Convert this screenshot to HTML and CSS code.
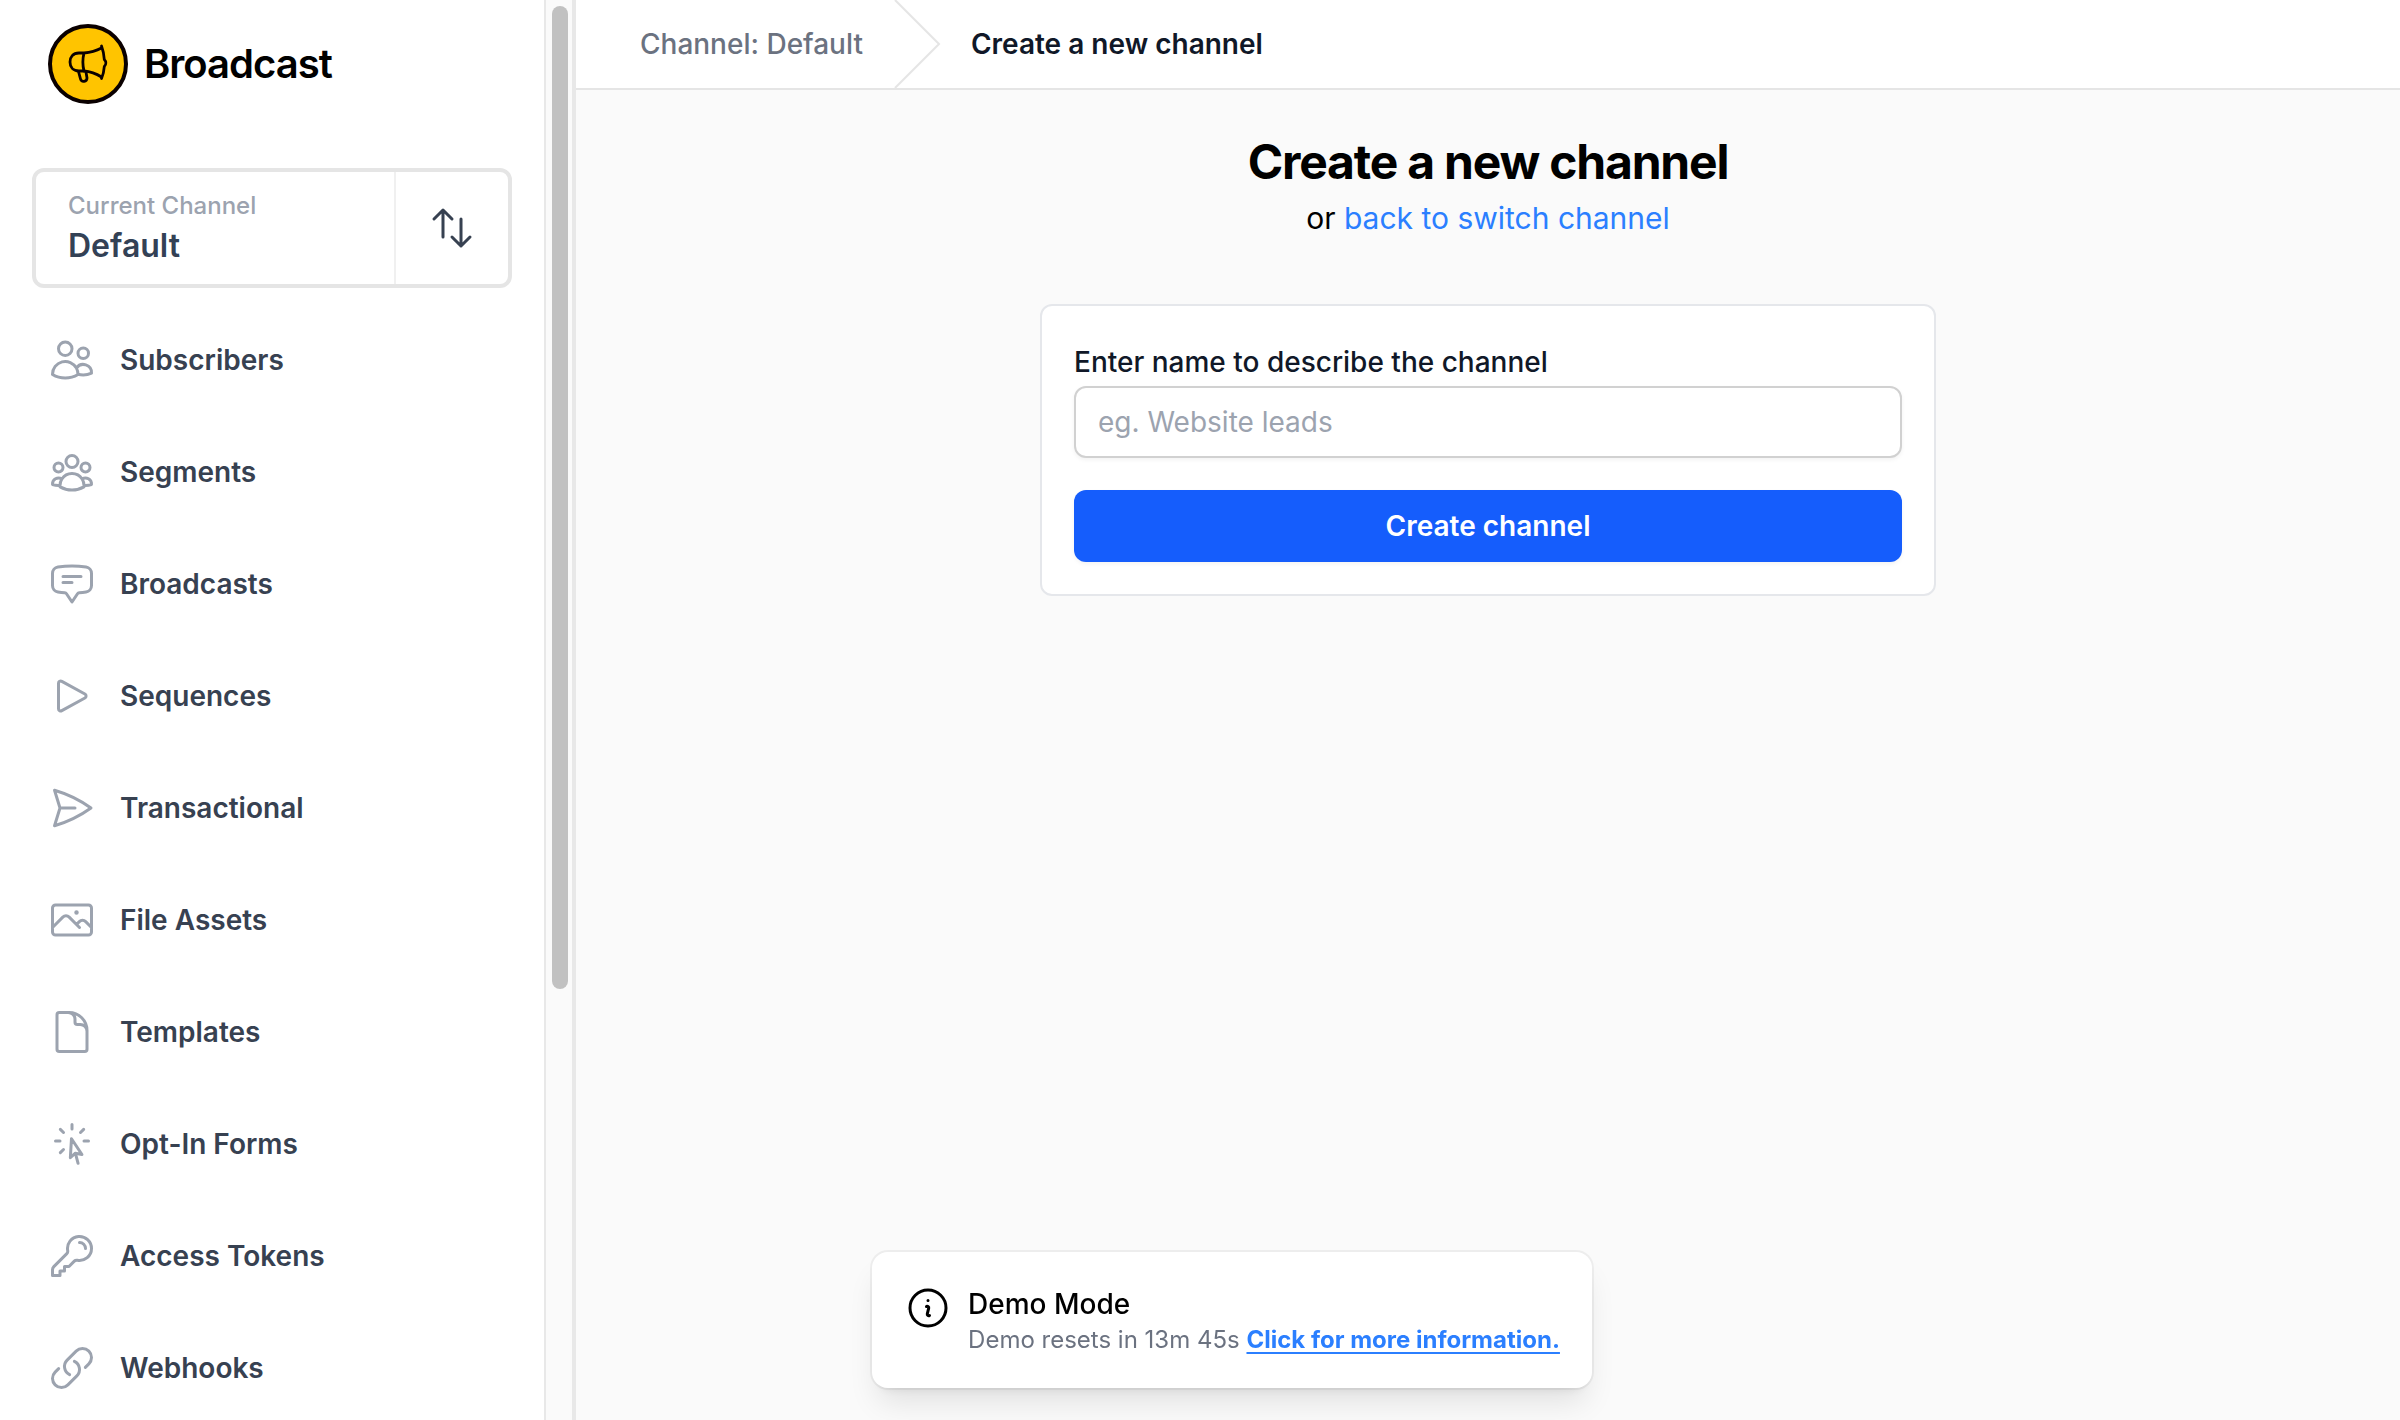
FILE: index.html
```html
<!DOCTYPE html>
<html lang="en">
<head>
    <meta charset="UTF-8" />
    <meta name="viewport" content="width=device-width, initial-scale=1" />
    <title>Create a new channel</title>
    <link rel="stylesheet" href="styles.css">
</head>
<body>

<aside class="sidebar">
    <div class="sidebar-content">
        <a class="brand" href="#">
            <svg class="brand-logo" viewBox="0 0 80 80" aria-hidden="true">
                <circle cx="40" cy="40" r="38" fill="#ffc400" stroke="#0a0000" stroke-width="4" />
                <g fill="none" stroke="#0a0000" stroke-width="2.8" stroke-linecap="round" stroke-linejoin="round">
                    <path d="M36 29h-5c-6 0-9 4-9 9s3 9 9 9h5c-1.500-6-1.500-12 0-18c7-.5 12-2 17.500-5" />
                    <path d="M36 47c7 .5 12 2.500 17.500 6" />
                    <path d="M53.500 22c1.500 4 2.500 9 2.800 13.500c2 2 2 5 0 7c-.3 4.500-1.300 8.500-2.800 12" />
                    <path d="M30.500 47.500l2 7.500c1 3.500 6.500 3 6.500-1l-1-6" />
                </g>
            </svg>
            <span>Broadcast</span>
        </a>

        <div class="channel">
            <div class="channel-current">
                <span class="channel-label">Current Channel</span>
                <span class="channel-name">Default</span>
            </div>
            <button class="channel-switch" type="button" aria-label="Switch channel">
                <svg class="icon" viewBox="0 0 24 24"><path d="M3 7.500 7.500 3m0 0L12 7.500M7.500 3v13.500m13.500 0L16.500 21m0 0L12 16.500m4.500 4.500V7.500" /></svg>
            </button>
        </div>

        <nav class="menu">
            <a class="menu-item" href="#">
                <svg class="icon" viewBox="0 0 24 24"><path d="M15 19.128a9.380 9.380 0 0 0 2.625.372 9.337 9.337 0 0 0 4.121-.952 4.125 4.125 0 0 0-7.533-2.493M15 19.128v-.003c0-1.113-.285-2.160-.786-3.070M15 19.128v.106A12.318 12.318 0 0 1 8.624 21c-2.331 0-4.512-.645-6.374-1.766l-.001-.109a6.375 6.375 0 0 1 11.964-3.070M12 6.375a3.375 3.375 0 1 1-6.750 0 3.375 3.375 0 0 1 6.750 0Zm8.250 2.250a2.625 2.625 0 1 1-5.250 0 2.625 2.625 0 0 1 5.250 0Z" /></svg>
                Subscribers
            </a>
            <a class="menu-item" href="#">
                <svg class="icon" viewBox="0 0 24 24"><path d="M18 18.720a9.094 9.094 0 0 0 3.741-.479 3 3 0 0 0-4.682-2.720m.940 3.198.001.031c0 .225-.012.447-.037.666A11.944 11.944 0 0 1 12 21c-2.170 0-4.207-.576-5.963-1.584A6.062 6.062 0 0 1 6 18.719m12 0a5.971 5.971 0 0 0-.941-3.197m0 0A5.995 5.995 0 0 0 12 12.750a5.995 5.995 0 0 0-5.058 2.772m0 0a3 3 0 0 0-4.681 2.720 8.986 8.986 0 0 0 3.740.477m.940-3.197a5.971 5.971 0 0 0-.940 3.197M15 6.750a3 3 0 1 1-6 0 3 3 0 0 1 6 0Zm6 3a2.250 2.250 0 1 1-4.500 0 2.250 2.250 0 0 1 4.500 0Zm-13.500 0a2.250 2.250 0 1 1-4.500 0 2.250 2.250 0 0 1 4.500 0Z" /></svg>
                Segments
            </a>
            <a class="menu-item" href="#">
                <svg class="icon" viewBox="0 0 24 24"><path d="M7.500 8.250h9m-9 3H12m-9.750 1.510c0 1.600 1.123 2.994 2.707 3.227 1.129.166 2.270.293 3.423.379.350.026.670.210.865.501L12 21l2.755-4.133a1.140 1.140 0 0 1 .865-.501 48.172 48.172 0 0 0 3.423-.379c1.584-.233 2.707-1.626 2.707-3.228V6.741c0-1.602-1.123-2.995-2.707-3.228A48.394 48.394 0 0 0 12 3c-2.392 0-4.744.175-7.043.513C3.373 3.746 2.250 5.140 2.250 6.741v6.018Z" /></svg>
                Broadcasts
            </a>
            <a class="menu-item" href="#">
                <svg class="icon" viewBox="0 0 24 24"><path d="M5.250 5.653c0-.856.917-1.398 1.667-.986l11.540 6.347a1.125 1.125 0 0 1 0 1.972l-11.540 6.347a1.125 1.125 0 0 1-1.667-.986V5.653Z" /></svg>
                Sequences
            </a>
            <a class="menu-item" href="#">
                <svg class="icon" viewBox="0 0 24 24"><path d="M6 12 3.269 3.125A59.769 59.769 0 0 1 21.485 12 59.768 59.768 0 0 1 3.270 20.875L5.999 12Zm0 0h7.500" /></svg>
                Transactional
            </a>
            <a class="menu-item" href="#">
                <svg class="icon" viewBox="0 0 24 24"><path d="m2.250 15.750 5.159-5.159a2.250 2.250 0 0 1 3.182 0l5.159 5.159m-1.500-1.500 1.409-1.409a2.250 2.250 0 0 1 3.182 0l2.909 2.909m-18 3.750h16.500a1.500 1.500 0 0 0 1.500-1.500V6a1.500 1.500 0 0 0-1.500-1.500H3.750A1.500 1.500 0 0 0 2.250 6v12a1.500 1.500 0 0 0 1.500 1.500Zm10.500-11.250h.008v.008h-.008V8.250Zm.375 0a.375.375 0 1 1-.750 0 .375.375 0 0 1 .750 0Z" /></svg>
                File Assets
            </a>
            <a class="menu-item" href="#">
                <svg class="icon" viewBox="0 0 24 24"><path d="M19.500 14.250v-2.625a3.375 3.375 0 0 0-3.375-3.375h-1.500A1.125 1.125 0 0 1 13.500 7.125v-1.500a3.375 3.375 0 0 0-3.375-3.375H8.250m2.250 0H5.625c-.621 0-1.125.504-1.125 1.125v17.250c0 .621.504 1.125 1.125 1.125h12.750c.621 0 1.125-.504 1.125-1.125V11.250a9 9 0 0 0-9-9Z" /></svg>
                Templates
            </a>
            <a class="menu-item" href="#">
                <svg class="icon" viewBox="0 0 24 24"><path d="M15.042 21.672 13.684 16.600m0 0-2.510 2.225.569-9.470 5.227 7.917-3.286-.672ZM12 2.250V4.500m5.834.166-1.591 1.591M20.250 10.500H18M7.757 14.743l-1.590 1.590M6 10.500H3.750m4.007-4.243-1.590-1.590" /></svg>
                Opt-In Forms
            </a>
            <a class="menu-item" href="#">
                <svg class="icon" viewBox="0 0 24 24"><path d="M15.750 5.250a3 3 0 0 1 3 3m3 0a6 6 0 0 1-7.029 5.912c-.563-.097-1.159.026-1.563.430L10.500 17.250H8.250v2.250H6v2.250H2.250v-2.818c0-.597.237-1.170.659-1.591l6.499-6.499c.404-.404.527-1 .430-1.563A6 6 0 1 1 21.750 8.250Z" /></svg>
                Access Tokens
            </a>
            <a class="menu-item" href="#">
                <svg class="icon" viewBox="0 0 24 24"><path d="M13.190 8.688a4.500 4.500 0 0 1 1.242 7.244l-4.500 4.500a4.500 4.500 0 0 1-6.364-6.364l1.757-1.757m13.350-.622 1.757-1.757a4.500 4.500 0 0 0-6.364-6.364l-4.500 4.500a4.500 4.500 0 0 0 1.242 7.244" /></svg>
                Webhooks
            </a>
        </nav>
    </div>
    <div class="scrollbar" aria-hidden="true">
        <div class="scrollbar-thumb"></div>
    </div>
</aside>

<div class="page">
    <header class="breadcrumb">
        <a class="breadcrumb-link" href="#">Channel: Default</a>
        <svg class="breadcrumb-arrow" viewBox="0 0 24 44" aria-hidden="true"><path d="M1 0l22 22L1 44" /></svg>
        <span class="breadcrumb-current">Create a new channel</span>
    </header>

    <main class="main">
        <h1>Create a new channel</h1>
        <p class="subtitle">or <a href="#">back to switch channel</a></p>

        <form class="card">
            <label for="name">Enter name to describe the channel</label>
            <input type="text" id="name" placeholder="eg. Website leads" />
            <button class="submit" type="submit">Create channel</button>
        </form>
    </main>
</div>

<div class="notice-wrap">
    <div class="notice">
        <svg class="icon" viewBox="0 0 24 24" aria-hidden="true"><path d="m11.250 11.250.041-.020a.750.750 0 0 1 1.063.852l-.708 2.836a.750.750 0 0 0 1.063.853l.041-.021M21 12a9 9 0 1 1-18 0 9 9 0 0 1 18 0Zm-9-3.750h.008v.008H12V8.250Z" /></svg>
        <div>
            <p class="notice-title">Demo Mode</p>
            <p class="notice-text">Demo resets in 13m 45s <a href="#">Click for more information.</a></p>
        </div>
    </div>
</div>

</body>
</html>
```

FILE: styles.css
```css
* {
    box-sizing: border-box;
}
body {
    font-family: Inter, "Liberation Sans", sans-serif;
    font-size: 28px;
    line-height: 48px;
    background: #fafafa;
    color: #000;
    display: flex;
    height: 100vh;
    margin: 0;
    overflow: hidden;
}
h1, p {
    margin: 0;
}
a {
    color: #2b7fff;
    text-decoration: none;
}
.icon {
    width: 48px;
    height: 48px;
    flex: none;
    fill: none;
    stroke: currentColor;
    stroke-width: 1.5;
    stroke-linecap: round;
    stroke-linejoin: round;
}

/* Sidebar */
.sidebar {
    display: flex;
    flex: none;
    width: 576px;
    background: white;
    border-right: 4px solid #e8e8e8;
}
.sidebar-content {
    flex: 1;
    padding: 24px 32px;
    overflow: hidden;
}
.brand {
    display: flex;
    align-items: center;
    gap: 16px;
    padding-left: 16px;
    color: #000;
    font-size: 40px;
    font-weight: 600;
    letter-spacing: -0.025em;
}
.brand-logo {
    width: 80px;
    height: 80px;
}
.channel {
    display: flex;
    height: 120px;
    margin: 64px 0 16px;
    border: 4px solid #e5e5e5;
    border-radius: 12px;
}
.channel-current {
    display: flex;
    flex: 1;
    flex-direction: column;
    padding: 18px 32px 14px;
}
.channel-label {
    color: #9ca3af;
    font-size: 24px;
    font-weight: 500;
    line-height: 32px;
}
.channel-name {
    color: #334155;
    font-size: 32px;
    font-weight: 600;
}
.channel-switch {
    display: flex;
    align-items: center;
    justify-content: center;
    width: 114px;
    padding: 0;
    border: none;
    border-left: 2px solid #f0f0f0;
    background: none;
    color: #374151;
    cursor: pointer;
}
.menu-item {
    display: flex;
    align-items: center;
    gap: 24px;
    padding: 32px 16px;
    color: #374151;
    font-weight: 600;
}
.menu-item .icon {
    color: #9ca3af;
}
.scrollbar {
    width: 28px;
    padding: 6px 4px 0 6px;
    background: #fafafa;
    border-left: 2px solid #e8e8e8;
}
.scrollbar-thumb {
    width: 16px;
    height: 69.500%;
    border-radius: 8px;
    background: #c1c1c1;
}

/* Page */
.page {
    flex: 1;
}
.breadcrumb {
    display: flex;
    align-items: center;
    gap: 30px;
    padding-left: 64px;
    background: white;
    border-bottom: 2px solid #e5e5e5;
}
.breadcrumb-link {
    color: #6b7280;
    font-weight: 500;
}
.breadcrumb-arrow {
    width: 48px;
    height: 88px;
    fill: none;
    stroke: #e5e5e5;
}
.breadcrumb-current {
    color: #101828;
    font-weight: 600;
}
.main {
    padding: 40px 32px;
    text-align: center;
}
h1 {
    font-size: 48px;
    line-height: 64px;
    letter-spacing: -0.025em;
}
.subtitle {
    font-size: 30px;
}
.card {
    display: flex;
    flex-direction: column;
    max-width: 896px;
    margin: 62px auto 0;
    padding: 32px;
    background: white;
    border: 2px solid #e5e7eb;
    border-radius: 12px;
    text-align: left;
}
label {
    color: #101828;
    font-weight: 500;
}
input {
    height: 72px;
    padding: 0 22px;
    border: 2px solid #d1d1d1;
    border-radius: 12px;
    background: white;
    box-shadow: 0 2px 4px rgba(0,0,0,0.05);
    color: #101828;
    font: inherit;
}
input::placeholder {
    color: #9ca3af;
}
.submit {
    height: 72px;
    margin-top: 32px;
    border: none;
    border-radius: 12px;
    background: #155dfc;
    box-shadow: 0 2px 4px rgba(0,0,0,0.05);
    color: white;
    font: inherit;
    font-weight: 600;
    cursor: pointer;
}

/* Demo notice */
.notice-wrap {
    position: fixed;
    right: 0;
    bottom: 32px;
    left: 64px;
    display: flex;
    justify-content: center;
}
.notice {
    display: flex;
    gap: 16px;
    padding: 32px;
    background: white;
    border-radius: 16px;
    box-shadow: 0 0 0 2px rgba(0,0,0,0.05), 0 20px 30px -6px rgba(0,0,0,0.1), 0 8px 12px -8px rgba(0,0,0,0.1);
}
.notice-title {
    font-weight: 500;
    line-height: 40px;
}
.notice-text {
    color: #6b7280;
    font-size: 24px;
    line-height: 32px;
}
.notice-text a {
    font-weight: 700;
    text-decoration: underline;
    text-underline-offset: 4px;
}
```
